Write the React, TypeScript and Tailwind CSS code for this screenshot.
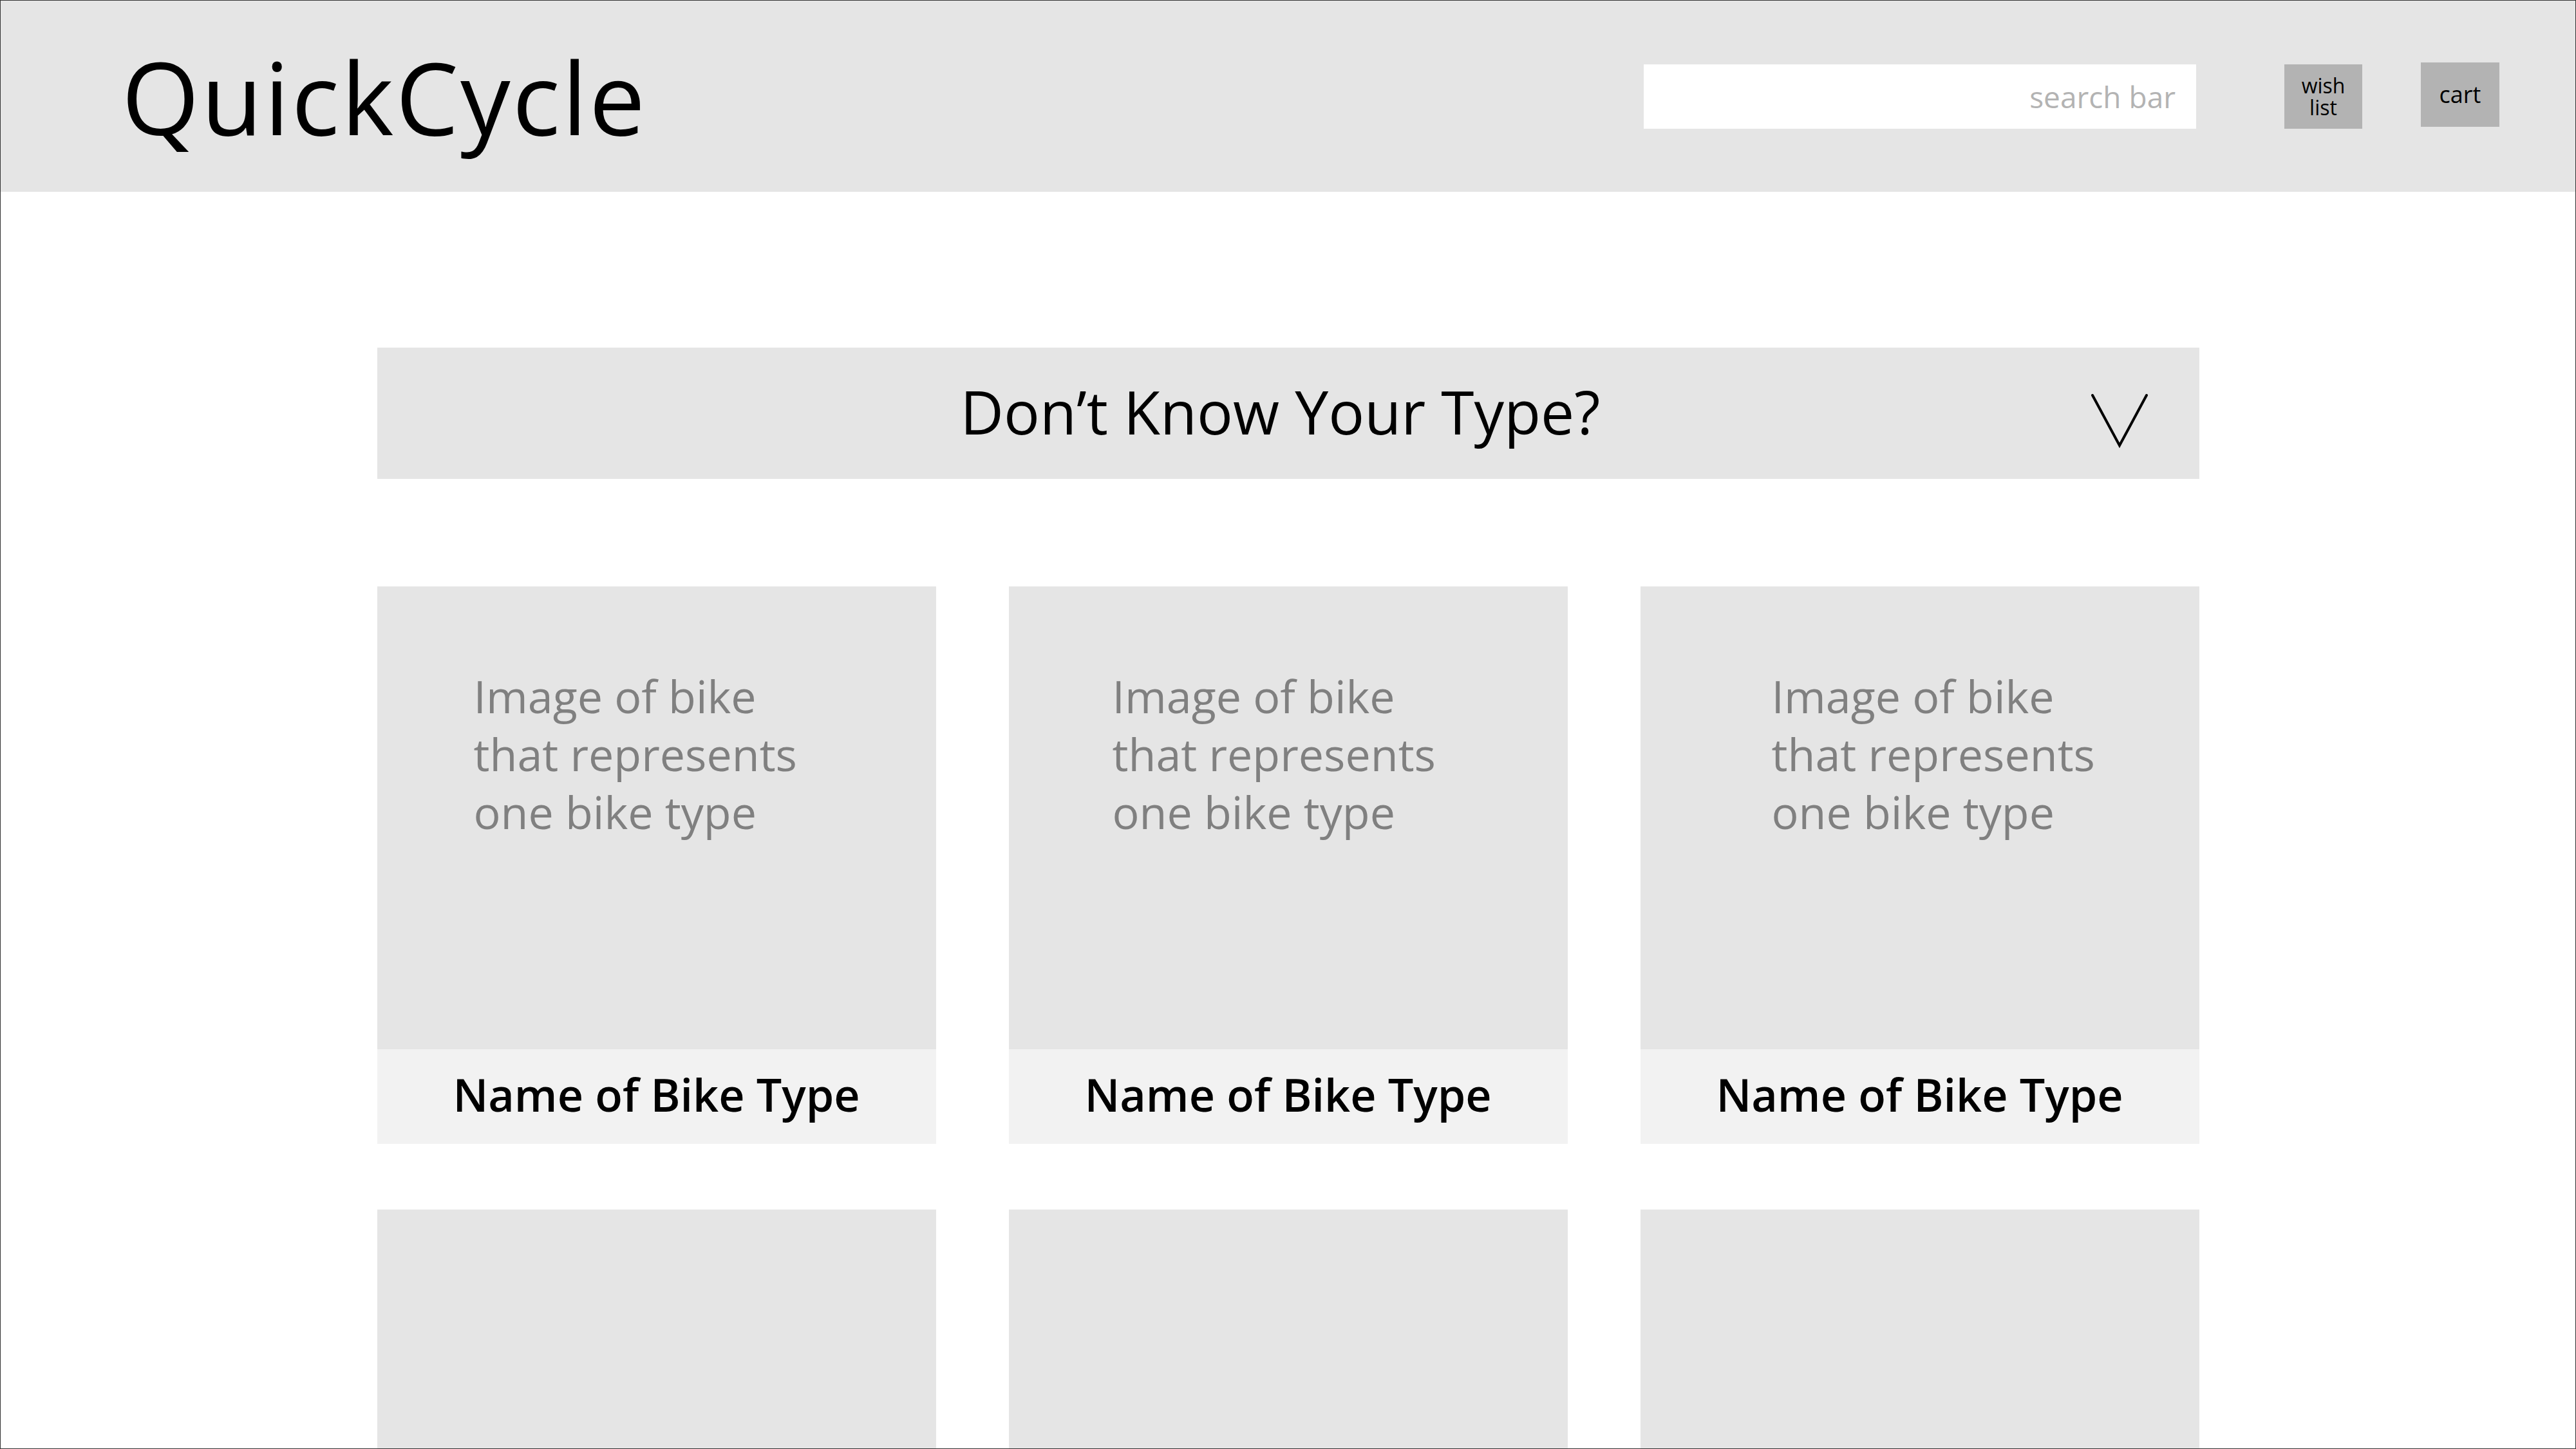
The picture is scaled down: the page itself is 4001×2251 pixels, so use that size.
const bikeTypes = [
  { pad: 'pl-[150px]' },
  { pad: 'pl-[161px]' },
  { pad: 'pl-[204px]' },
]

function Chevron() {
  return (
    <svg width="92" height="86" viewBox="0 0 92 86" fill="none">
      <polyline
        points="4,4 46,82 88,4"
        stroke="#000"
        strokeWidth="4"
        strokeLinecap="round"
        strokeLinejoin="miter"
      />
    </svg>
  )
}

export default function App() {
  return (
    <div className="w-[4001px] h-[2251px] overflow-hidden bg-white border border-[#333] font-['Open_Sans',sans-serif] text-black">
      {/* header */}
      <header className="h-[297px] bg-[#e5e5e5] flex items-center pl-[188px] pr-[118px]">
        <h1 className="text-[155px] leading-none font-normal tracking-[3px]">QuickCycle</h1>
        <div className="ml-auto w-[858px] h-[100px] bg-white flex items-center justify-end pr-[32px]">
          <span className="text-[46px] text-[#b3b3b3] leading-none">search bar</span>
        </div>
        <button className="ml-[137px] w-[121px] h-[100px] bg-[#b3b3b3] flex items-center justify-center">
          <span className="text-[32px] leading-[34px] text-center">
            wish
            <br />
            list
          </span>
        </button>
        <button className="ml-[91px] w-[122px] h-[100px] bg-[#b3b3b3] flex items-center justify-center text-[36px] leading-none -mt-[6px]">
          cart
        </button>
      </header>

      <main className="w-[2830px] mx-auto">
        {/* type helper banner */}
        <div className="relative mt-[242px] h-[204px] bg-[#e5e5e5] flex items-center justify-center pr-[24px] pb-[6px]">
          <span className="text-[93px] leading-none">Don’t Know Your Type?</span>
          <div className="absolute right-[78px] top-[70px]">
            <Chevron />
          </div>
        </div>

        {/* bike types */}
        <div className="mt-[167px] grid grid-cols-3 gap-x-[113px] gap-y-[102px]">
          {bikeTypes.map((b, i) => (
            <div key={i} className="flex flex-col">
              <div className={`h-[719px] bg-[#e5e5e5] pt-[125px] ${b.pad}`}>
                <p className="text-[70px] leading-[90px] text-[#808080]">
                  Image of bike
                  <br />
                  that represents
                  <br />
                  one bike type
                </p>
              </div>
              <div className="h-[147px] bg-[#f2f2f2] flex items-center justify-center pb-[8px]">
                <span className="text-[70px] leading-none font-semibold">Name of Bike Type</span>
              </div>
            </div>
          ))}
          {bikeTypes.map((_, i) => (
            <div key={'r2' + i} className="h-[866px] bg-[#e5e5e5]" />
          ))}
        </div>
      </main>
    </div>
  )
}
